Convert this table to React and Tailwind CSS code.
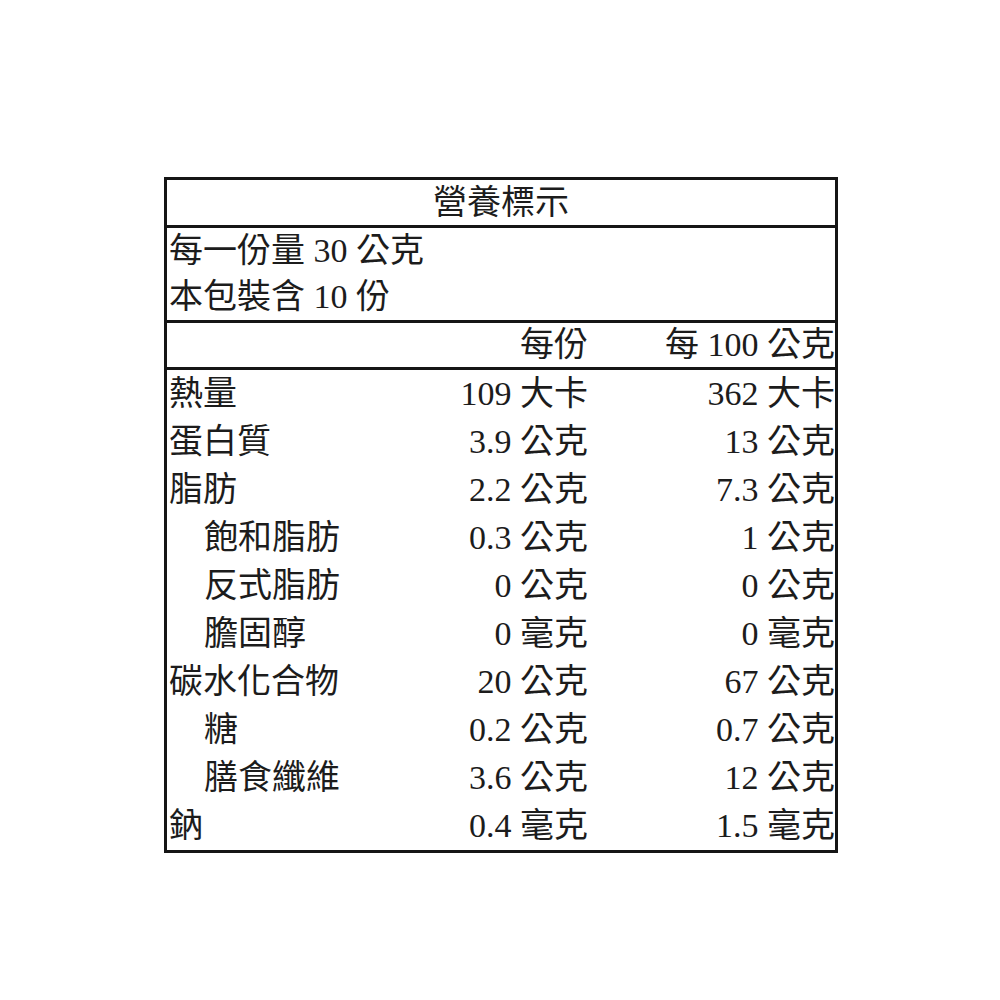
const rows = [
  { label: "熱量", per: "109 大卡", per100: "362 大卡" },
  { label: "蛋白質", per: "3.9 公克", per100: "13 公克" },
  { label: "脂肪", per: "2.2 公克", per100: "7.3 公克" },
  { label: "飽和脂肪", per: "0.3 公克", per100: "1 公克", sub: true },
  { label: "反式脂肪", per: "0 公克", per100: "0 公克", sub: true },
  { label: "膽固醇", per: "0 毫克", per100: "0 毫克", sub: true },
  { label: "碳水化合物", per: "20 公克", per100: "67 公克" },
  { label: "糖", per: "0.2 公克", per100: "0.7 公克", sub: true },
  { label: "膳食纖維", per: "3.6 公克", per100: "12 公克", sub: true },
  { label: "鈉", per: "0.4 毫克", per100: "1.5 毫克" },
];

function Row({ label, per, per100, sub }) {
  return (
    <div className="flex h-[48px] items-center leading-[48px]">
      <div className={sub ? "flex-1 pl-[37px]" : "flex-1 pl-[2px]"}>{label}</div>
      <div className="w-[170px] text-right">{per}</div>
      <div className="w-[247px] text-right">{per100}</div>
    </div>
  );
}

export default function App() {
  return (
    <div className="min-h-[1000px] bg-white pt-[177px]">
      <div
        className="ml-[164px] w-[674px] border-[3px] border-[#151515] text-[34px] text-[#1c1c1c] whitespace-nowrap"
        style={{ fontFamily: '"Liberation Serif", "Noto Sans CJK TC", serif' }}
      >
        <div className="h-[45px] text-center leading-[45px]">營養標示</div>
        <div className="h-[95px] border-t-[3px] border-[#151515] pl-[2px]">
          <div className="h-[46px] leading-[46px]">每一份量 30 公克</div>
          <div className="h-[46px] leading-[46px]">本包裝含 10 份</div>
        </div>
        <div className="flex h-[47px] items-center border-t-[3px] border-[#151515] leading-[44px]">
          <div className="flex-1"></div>
          <div className="w-[170px] text-right">每份</div>
          <div className="w-[247px] text-right">每 100 公克</div>
        </div>
        <div className="border-t-[3px] border-[#151515]">
          {rows.map((r) => (
            <Row key={r.label} {...r} />
          ))}
        </div>
      </div>
    </div>
  );
}
